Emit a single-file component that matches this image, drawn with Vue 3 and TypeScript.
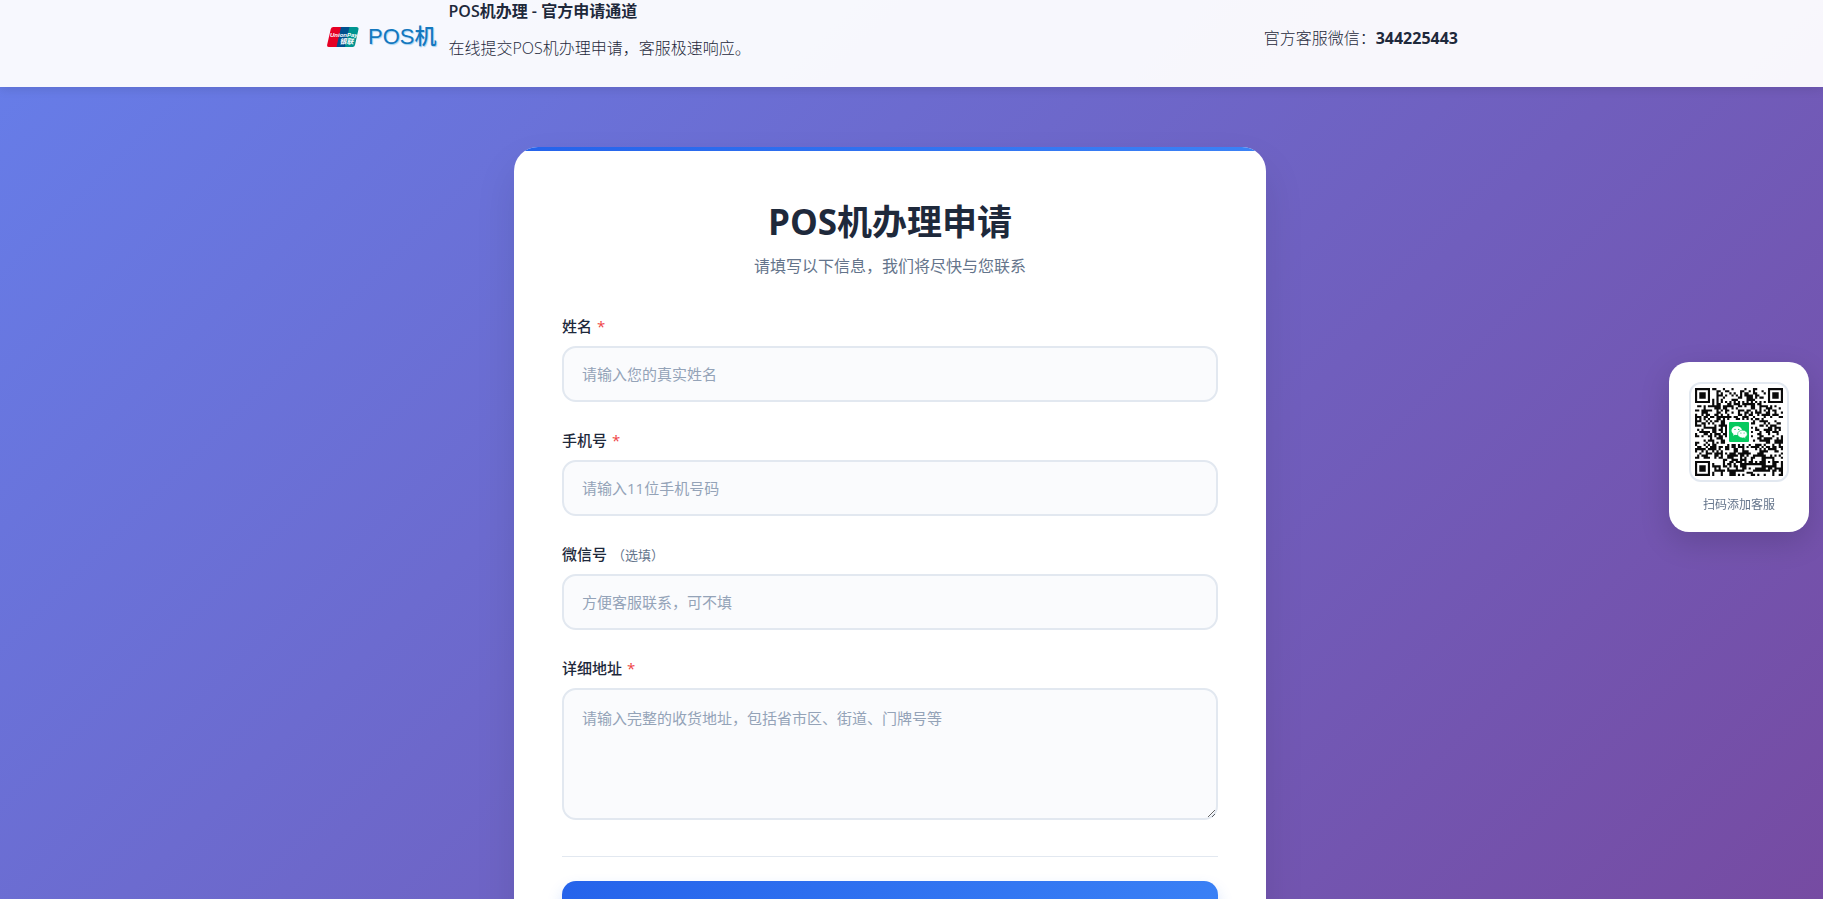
<script setup lang="ts">
import { reactive } from 'vue'

interface Field {
  id: 'name' | 'phone' | 'wechat' | 'address'
  label: string
  placeholder: string
  type: 'text' | 'tel' | 'area'
  required: boolean
}

const fields: Field[] = [
  { id: 'name', label: '姓名', placeholder: '请输入您的真实姓名', type: 'text', required: true },
  { id: 'phone', label: '手机号', placeholder: '请输入11位手机号码', type: 'tel', required: true },
  { id: 'wechat', label: '微信号', placeholder: '方便客服联系，可不填', type: 'text', required: false },
  { id: 'address', label: '详细地址', placeholder: '请输入完整的收货地址，包括省市区、街道、门牌号等', type: 'area', required: true },
]

const form = reactive({ name: '', phone: '', wechat: '', address: '' })

// Module pattern of the contact code: three finders, one alignment mark, timing lines and data.
const size = 41
function ring(x: number, y: number, cx: number, cy: number): number {
  return Math.max(Math.abs(x - cx), Math.abs(y - cy))
}
function buildModules(): string {
  let seed = 20731
  let path = ''
  for (let y = 0; y < size; y++) {
    for (let x = 0; x < size; x++) {
      seed = (seed * 1103515245 + 12345) % 2147483648
      let dark = (seed >> 12) % 100 < 50
      if (x === 6 || y === 6) dark = (x + y) % 2 === 0
      const centres: [number, number][] = [[3, 3], [size - 4, 3], [3, size - 4]]
      for (const [cx, cy] of centres) {
        const d = ring(x, y, cx, cy)
        if (d <= 4) dark = d < 2 || d === 3
      }
      const a = ring(x, y, 34, 34)
      if (a <= 2) dark = a !== 1
      if (ring(x, y, 20, 20) <= 5) dark = false
      if (dark) path += `M${x} ${y}h1v1h-1z`
    }
  }
  return path
}
const modules = buildModules()
</script>

<template>
  <div class="page">
    <header class="topbar">
      <div class="topbar-inner">
        <a class="brand" href="#">
          <svg class="unionpay" viewBox="0 0 32 20" role="img" aria-label="UnionPay">
            <defs>
              <clipPath id="plate">
                <path d="M6.300 0H29.500Q32 0 31.500 2.300L28 18Q27.600 20 25.600 20H2Q-.4 20 .2 17.600L3.800 2Q4.300 0 6.300 0Z" />
              </clipPath>
            </defs>
            <g clip-path="url(#plate)">
              <path d="M0 0H15L10.500 20H0Z" fill="#e60024" />
              <path d="M14 0H24L19.500 20H9.500Z" fill="#00508e" />
              <path d="M22.500 0H32V20H18Z" fill="#009490" />
              <text x="3" y="9.500" class="up-latin">UnionPay</text>
              <text x="12.500" y="16.500" class="up-cjk">银联</text>
            </g>
          </svg>
          <span class="brand-name">POS机</span>
        </a>
        <div class="intro">
          <h2>POS机办理 - 官方申请通道</h2>
          <p>在线提交POS机办理申请，客服极速响应。</p>
        </div>
        <div class="contact">官方客服微信：<strong>344225443</strong></div>
      </div>
    </header>

    <main class="content">
      <section class="card">
        <h1>POS机办理申请</h1>
        <p class="lead">请填写以下信息，我们将尽快与您联系</p>
        <form @submit.prevent>
          <div v-for="f in fields" :key="f.id" class="field">
            <label :for="f.id">
              {{ f.label }}<span v-if="f.required" class="star">*</span><span v-else class="optional">（选填）</span>
            </label>
            <textarea v-if="f.type === 'area'" :id="f.id" v-model="form[f.id]" :placeholder="f.placeholder" />
            <input v-else :id="f.id" v-model="form[f.id]" :type="f.type" :placeholder="f.placeholder" />
          </div>
          <div class="actions">
            <button type="submit">提交申请</button>
          </div>
        </form>
      </section>
    </main>

    <aside class="qr-card">
      <div class="qr-frame">
        <svg viewBox="0 0 88 88" role="img" aria-label="客服微信二维码">
          <g transform="scale(2.146)"><path :d="modules" fill="#0a0a0a" /></g>
          <rect x="32" y="32" width="24" height="24" fill="#fff" />
          <rect x="34" y="34" width="20" height="20" rx="1" fill="#07c95f" />
          <path d="M41.800 38.200c-3 0-5.300 2-5.300 4.400 0 1.400.8 2.600 2 3.400l-.5 1.700 2-1c.6.2 1.200.3 1.800.3 3 0 5.300-2 5.300-4.400s-2.300-4.400-5.300-4.400Z" fill="#fff" />
          <path d="M47.500 42.200c-2.700 0-4.900 1.700-4.900 3.900s2.200 3.900 4.900 3.900c.5 0 1-.1 1.500-.2l1.700.9-.4-1.500c1.200-.7 2-1.800 2-3.100 0-2.200-2.200-3.900-4.800-3.900Z" fill="#fff" stroke="#07c95f" stroke-width=".6" />
          <g fill="#07c95f">
            <circle cx="40" cy="41.400" r=".7" /><circle cx="43.700" cy="41.400" r=".7" />
            <circle cx="45.900" cy="45" r=".6" /><circle cx="49.100" cy="45" r=".6" />
          </g>
        </svg>
      </div>
      <p>扫码添加客服</p>
    </aside>
  </div>
</template>

<style>
body {
  margin: 0;
  background: linear-gradient(135deg, #667eea 0%, #764ba2 100%) fixed;
}
</style>

<style scoped>
.page {
  min-height: 100vh;
  font-family: "Open Sans", "Noto Sans CJK SC", sans-serif;
  font-size: 16px;
  color: #1e293b;
}
.page *,
.page *::before {
  box-sizing: border-box;
}
h1,
h2,
p {
  margin: 0;
}
.topbar {
  position: relative;
  padding-right: 43px;
  background: rgba(255, 255, 255, 0.95);
  box-shadow: 0 2px 10px rgba(0, 0, 0, 0.1);
}
.topbar-inner {
  display: flex;
  align-items: center;
  max-width: 1200px;
  height: 87px;
  margin: 0 auto;
  padding: 0 32px 12px;
}
.brand {
  display: flex;
  align-items: center;
  gap: 9px;
  margin: 0 12px 2px 5px;
  color: #1478be;
  text-decoration: none;
}
.unionpay {
  width: 32px;
  height: 20px;
}
.up-latin {
  fill: #fff;
  font: italic 700 6px "Liberation Sans", sans-serif;
}
.up-cjk {
  fill: #fff;
  font: italic 700 7px "Noto Sans CJK SC", sans-serif;
}
.brand-name {
  font: 500 22px/28px "Liberation Sans", "Noto Sans CJK SC", sans-serif;
  text-shadow: 1px 1px 1px #9fd0f2;
}
.intro {
  align-self: flex-start;
}
.intro h2 {
  padding-bottom: 14px;
  font-size: 16px;
  font-weight: 600;
  line-height: 22px;
}
.intro p {
  font-weight: 300;
  line-height: 25px;
}
.contact {
  margin-left: auto;
  font-weight: 300;
  line-height: 26px;
}
.contact strong {
  font-weight: 700;
}
.content {
  padding: 60px 43px 60px 0;
}
.card {
  position: relative;
  overflow: hidden;
  max-width: 752px;
  margin: 0 auto;
  padding: 48px;
  border-radius: 24px;
  background: #fff;
  box-shadow: 0 20px 40px rgba(0, 0, 0, 0.1);
}
.card::before {
  content: "";
  position: absolute;
  inset: 0 0 auto;
  height: 4px;
  background: linear-gradient(90deg, #2563eb, #3b82f6);
}
h1 {
  font-size: 35px;
  font-weight: 700;
  line-height: 54px;
  text-align: center;
}
.lead {
  padding: 4px 0 36px;
  line-height: 26px;
  text-align: center;
  color: #64748b;
}
.field {
  margin-bottom: 27px;
}
label {
  display: block;
  height: 31px;
  font-size: 15px;
  font-weight: 500;
  line-height: 22px;
}
.star {
  margin-left: 5px;
  color: #ef4444;
}
.optional {
  margin-left: 5px;
  font-size: 13px;
  font-weight: 400;
  color: #64748b;
}
input,
textarea {
  display: block;
  width: 100%;
  height: 56px;
  padding: 0 18px;
  border: 2px solid #e2e8f0;
  border-radius: 14px;
  background: #fafbfd;
  color: #1e293b;
  font: 15px/24px "Open Sans", "Noto Sans CJK SC", sans-serif;
}
textarea {
  height: 132px;
  padding: 16px 18px;
  resize: vertical;
}
input::placeholder,
textarea::placeholder {
  color: #94a3b8;
}
.actions {
  margin-top: 36px;
  padding-top: 24px;
  border-top: 1px solid #e2e8f0;
}
button {
  display: block;
  width: 100%;
  height: 64px;
  border: 0;
  border-radius: 14px;
  background: linear-gradient(135deg, #2563eb, #3b82f6);
  box-shadow: 0 8px 16px rgba(37, 99, 235, 0.2);
  color: #fff;
  font: 600 16px/24px "Open Sans", "Noto Sans CJK SC", sans-serif;
}
.qr-card {
  position: fixed;
  top: 362px;
  right: 14px;
  width: 140px;
  padding: 20px 20px 17px;
  border-radius: 20px;
  background: #fff;
  box-shadow: 0 10px 30px rgba(0, 0, 0, 0.15);
}
.qr-frame {
  width: 100px;
  height: 100px;
  padding: 4px;
  border: 2px solid #e2e8f0;
  border-radius: 12px;
}
.qr-frame svg {
  display: block;
  width: 88px;
  height: 88px;
}
.qr-card p {
  padding-top: 13px;
  font-size: 12px;
  line-height: 20px;
  text-align: center;
  color: #64748b;
}
</style>
